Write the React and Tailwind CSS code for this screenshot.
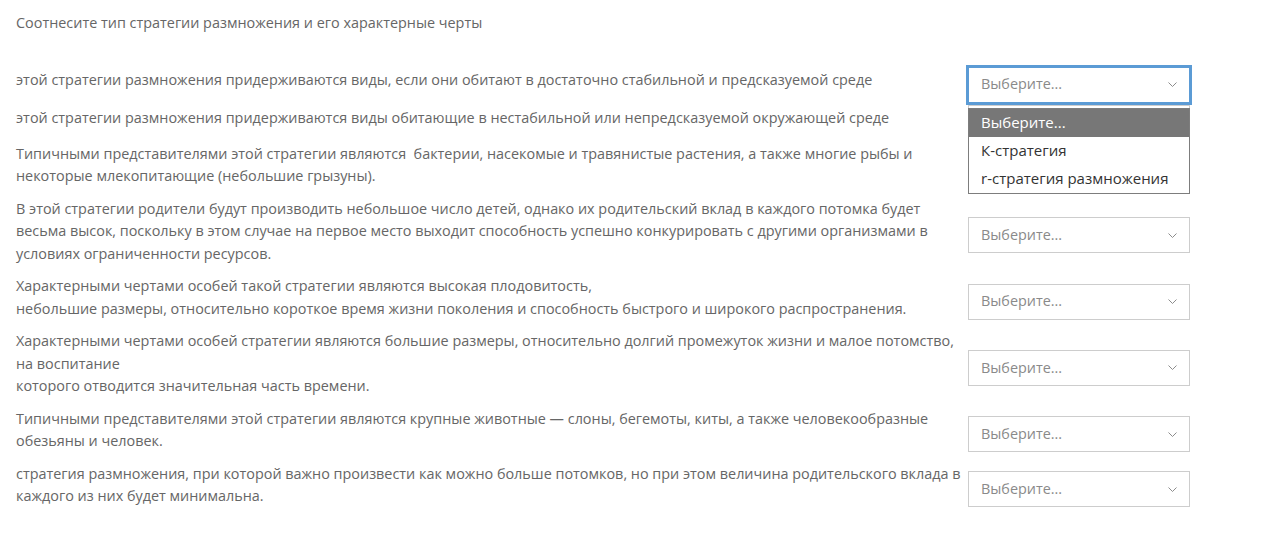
import React from 'react';

const rows = [
  'этой стратегии размножения придерживаются виды, если они обитают в достаточно стабильной и предсказуемой среде',
  'этой стратегии размножения придерживаются виды обитающие в нестабильной или непредсказуемой окружающей среде',
  'Типичными представителями этой стратегии являются\u00a0 бактерии, насекомые и травянистые растения, а также многие рыбы и некоторые млекопитающие (небольшие грызуны).',
  'В этой стратегии родители будут производить небольшое число детей, однако их родительский вклад в каждого потомка будет весьма высок, поскольку в этом случае на первое место выходит способность успешно конкурировать с другими организмами в условиях ограниченности ресурсов.',
  ['Характерными чертами особей такой стратегии являются высокая плодовитость,', 'небольшие размеры, относительно короткое время жизни поколения и способность быстрого и широкого распространения.'],
  ['Характерными чертами особей стратегии являются большие размеры, относительно долгий промежуток жизни и малое потомство, на воспитание', 'которого отводится значительная часть времени.'],
  'Типичными представителями этой стратегии являются крупные животные — слоны, бегемоты, киты, а также человекообразные обезьяны и человек.',
  'стратегия размножения, при которой важно произвести как можно больше потомков, но при этом величина родительского вклада в каждого из них будет минимальна.',
];

const Chevron = () => (
  <svg width="9" height="5" viewBox="0 0 9 5" fill="none">
    <path d="M0.5 0.5L4.5 4.5L8.5 0.5" stroke="#8c8c8c" strokeWidth="1" />
  </svg>
);

const Select = ({ open }) => (
  <div className="relative w-[222px]">
    <div
      className={
        open
          ? 'h-[36px] flex items-center justify-between pl-[12px] pr-[12px] bg-white border border-[#5b9bd5] ring-2 ring-[#5b9bd5]'
          : 'h-[36px] flex items-center justify-between pl-[12px] pr-[12px] bg-white border border-[#cdcdcd]'
      }
    >
      <span className="text-[#8a8a8a]">Выберите...</span>
      <Chevron />
    </div>
    {open && (
      <div className="absolute left-0 top-full mt-[5px] w-[222px] bg-white border border-[#7d7d7d] z-10 text-[15px] text-[#333]">
        <div className="h-[28px] flex items-center px-[12px] bg-[#777777] text-white font-medium">Выберите...</div>
        <div className="h-[28px] flex items-center px-[12px]">К-стратегия</div>
        <div className="h-[28px] flex items-center px-[12px]">r-стратегия размножения</div>
      </div>
    )}
  </div>
);

export default function App() {
  return (
    <div className="min-h-screen bg-white px-4 pt-[12px] font-['Open_Sans',sans-serif] text-[14.4px] leading-[22.5px] text-[#666666]">
      <p>Соотнесите тип стратегии размножения и его характерные черты</p>
      <div className="mt-[31px] w-[1174px]">
        {rows.map((text, i) => (
          <div key={i} className="grid grid-cols-[952px_222px] items-center">
            <div className="pt-px pb-[9px] pr-[6px]">
              {Array.isArray(text) ? (
                <>
                  {text[0]}
                  <br />
                  {text[1]}
                </>
              ) : (
                text
              )}
            </div>
            <div className="h-[38px] flex items-center">
              <Select open={i === 0} />
            </div>
          </div>
        ))}
      </div>
    </div>
  );
}
